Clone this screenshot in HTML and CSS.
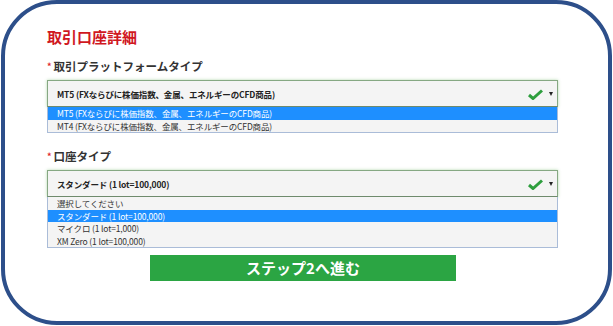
FILE: index.html
```html
<!DOCTYPE html>
<html lang="ja">
<head>
<meta charset="utf-8">
<title>取引口座詳細</title>
<link rel="stylesheet" href="styles.css">
</head>
<body>
<div class="frame">
  <h1 class="title">取引口座詳細</h1>

  <div class="label"><span class="req">*</span>取引プラットフォームタイプ</div>
  <div class="select">
    <span class="value">MT5 (FXならびに株価指数、金属、エネルギーのCFD商品)</span>
    <svg class="check" width="15" height="11" viewBox="0 0 15 11"><path d="M1 6 L5 9.5 L14 1.5" fill="none" stroke="#2e9e3e" stroke-width="3" stroke-linejoin="miter"/></svg>
    <span class="arrow"></span>
  </div>
  <ul class="list">
    <li class="opt active">MT5 (FXならびに株価指数、金属、エネルギーのCFD商品)</li>
    <li class="opt">MT4 (FXならびに株価指数、金属、エネルギーのCFD商品)</li>
  </ul>

  <div class="label label2"><span class="req">*</span>口座タイプ</div>
  <div class="select">
    <span class="value">スタンダード (1 lot=100,000)</span>
    <svg class="check" width="15" height="11" viewBox="0 0 15 11"><path d="M1 6 L5 9.5 L14 1.5" fill="none" stroke="#2e9e3e" stroke-width="3" stroke-linejoin="miter"/></svg>
    <span class="arrow"></span>
  </div>
  <ul class="list">
    <li class="opt">選択してください</li>
    <li class="opt active">スタンダード (1 lot=100,000)</li>
    <li class="opt">マイクロ (1 lot=1,000)</li>
    <li class="opt">XM Zero (1 lot=100,000)</li>
  </ul>

  <div class="actions">
    <button class="btn">ステップ2へ進む</button>
  </div>
</div>
</body>
</html>
```

FILE: styles.css
```css
html, body {
  margin: 0;
  padding: 0;
  background: #ffffff;
}
body {
  font-family: "Noto Sans CJK JP", "Noto Sans", sans-serif;
  color: #333;
}
.frame {
  margin-left: 1px;
  width: 611px;
  height: 325px;
  box-sizing: border-box;
  border: 4px solid #2d4f8a;
  border-radius: 56px;
  padding: 24px 50px 0 42px;
}
.title {
  margin: 0;
  font-size: 15px;
  line-height: 18px;
  font-weight: bold;
  color: #d0181f;
}
.label {
  margin-top: 13px;
  margin-bottom: 6px;
  font-size: 11.5px;
  line-height: 14px;
  font-weight: bold;
  color: #333;
}
.label2 {
  margin-top: 16px;
}
.req {
  color: #e0262c;
  font-size: 9px;
  margin-right: 2px;
  vertical-align: 1px;
}
.select {
  height: 27px;
  box-sizing: border-box;
  border: 1px solid #86a883;
  border-bottom-color: #6e8a6c;
  box-shadow: 0 0 3px rgba(90, 170, 80, 0.45);
  background: #f4f4f4;
  display: flex;
  align-items: center;
  padding: 0 4px 0 9px;
}
.value {
  flex: 1;
  font-size: 8.5px;
  letter-spacing: -0.15px;
  font-weight: bold;
  color: #222;
}
.check {
  margin-right: 6px;
  margin-top: 1px;
}
.arrow {
  width: 0;
  height: 0;
  border-left: 2px solid transparent;
  border-right: 2px solid transparent;
  border-top: 4px solid #222;
}
.list {
  list-style: none;
  margin: 0;
  padding: 0;
  border: 1px solid #aabcd8;
  border-top: none;
  background: #f4f4f4;
}
.opt {
  height: 12.5px;
  line-height: 12.5px;
  padding-left: 9px;
  font-size: 8.5px;
  letter-spacing: -0.15px;
  color: #333;
  overflow: hidden;
}
.opt.active {
  background: #1e8fff;
  color: #fff;
}
.actions {
  display: flex;
  justify-content: center;
  margin-top: 7px;
}
.btn {
  width: 306px;
  height: 26px;
  border: none;
  background: #2ba543;
  color: #fff;
  font-family: "Noto Sans CJK JP", sans-serif;
  font-size: 15px;
  font-weight: bold;
  line-height: 26px;
  padding: 0;
  margin-left: 1px;
}
```
